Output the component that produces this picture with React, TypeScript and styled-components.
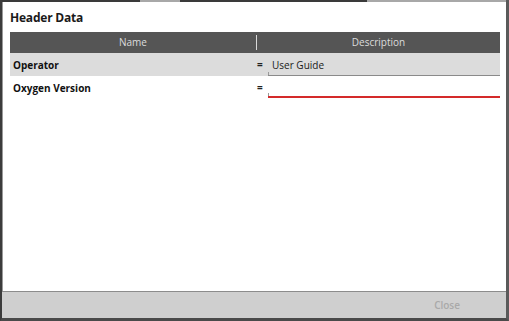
import styled, { createGlobalStyle } from "styled-components";

const GlobalStyle = createGlobalStyle`
  html, body {
    margin: 0;
    padding: 0;
    background: #ffffff;
  }
  body {
    font-family: "Open Sans", "Noto Sans", Arial, sans-serif;
  }
`;

const Frame = styled.div`
  width: 509px;
  height: 321px;
  box-sizing: border-box;
  display: flex;
  flex-direction: column;
  background: #ffffff;
  border-left: 2px solid #3c3c3c;
  border-right: 3px solid #5a5a5a;
  border-bottom: 3px solid #4a4a4a;
  box-shadow: inset 1px 0 0 #9a9a9a;
`;

const TopEdge = styled.div`
  display: flex;
  height: 2px;
`;

const EdgePart = styled.div<{ $w: number; $dark: boolean }>`
  width: ${(p) => p.$w}px;
  flex: ${(p) => (p.$w ? "none" : "1")};
  background: ${(p) => (p.$dark ? "#3a3a3a" : "#a8a8a8")};
`;

const Body = styled.div`
  flex: 1;
  padding: 6px 6px 0 8px;
`;

const Title = styled.h1`
  margin: 0 0 4px 0;
  font-size: 12px;
  font-weight: 700;
  color: #1a1a1a;
  line-height: 20px;
  letter-spacing: -0.2px;
`;

const Table = styled.div`
  display: flex;
  flex-direction: column;
  font-size: 10px;
`;

const HeadRow = styled.div`
  display: grid;
  grid-template-columns: 246px 1fr;
  height: 21px;
  background: #555555;
  color: #dcdcdc;
  align-items: center;
`;

const HeadCell = styled.div<{ $sep?: boolean }>`
  text-align: center;
  height: 15px;
  line-height: 15px;
  border-left: ${(p) => (p.$sep ? "1px solid #d8d8d8" : "none")};
`;

const Row = styled.div<{ $shaded?: boolean }>`
  display: grid;
  grid-template-columns: 246px 1fr;
  height: 23px;
  background: ${(p) => (p.$shaded ? "#dcdcdc" : "#ffffff")};
`;

const Label = styled.div`
  font-weight: 700;
  color: #111111;
  padding-left: 3px;
  line-height: 24px;
`;

const ValueCell = styled.div`
  display: flex;
  align-items: flex-start;
`;

const Equals = styled.span`
  width: 10px;
  font-weight: 700;
  line-height: 22px;
  color: #222222;
  padding-left: 1px;
`;

const Field = styled.div<{ $error?: boolean }>`
  position: relative;
  flex: 1;
  height: ${(p) => (p.$error ? "22px" : "23px")};
  box-sizing: border-box;
  margin-left: 1px;
  padding-left: 4px;
  line-height: 24px;
  color: #1a1a1a;
  border-bottom: ${(p) => (p.$error ? "2px solid #d42a2a" : "1px solid #8a8a8a")};

  &::before {
    content: "";
    position: absolute;
    left: 0;
    bottom: 0;
    width: 1px;
    height: 3px;
    background: #9a9a9a;
  }
`;

const Footer = styled.div`
  height: 26px;
  background: #cfcfcf;
  border-top: 1px solid #8c8c8c;
  display: flex;
  justify-content: flex-end;
  align-items: center;
`;

const CloseButton = styled.button`
  background: none;
  border: none;
  font-family: inherit;
  font-size: 10px;
  font-weight: 600;
  color: #a9a9a9;
  margin-right: 46px;
  padding: 0;
`;

export default function App() {
  return (
    <>
      <GlobalStyle />
      <Frame>
        <TopEdge>
          <EdgePart $w={138} $dark />
          <EdgePart $w={40} $dark={false} />
          <EdgePart $w={187} $dark />
          <EdgePart $w={0} $dark={false} />
        </TopEdge>
        <Body>
          <Title>Header Data</Title>
          <Table>
            <HeadRow>
              <HeadCell>Name</HeadCell>
              <HeadCell $sep>Description</HeadCell>
            </HeadRow>
            <Row $shaded>
              <Label>Operator</Label>
              <ValueCell>
                <Equals>=</Equals>
                <Field>User Guide</Field>
              </ValueCell>
            </Row>
            <Row>
              <Label>Oxygen Version</Label>
              <ValueCell>
                <Equals>=</Equals>
                <Field $error />
              </ValueCell>
            </Row>
          </Table>
        </Body>
        <Footer>
          <CloseButton>Close</CloseButton>
        </Footer>
      </Frame>
    </>
  );
}
